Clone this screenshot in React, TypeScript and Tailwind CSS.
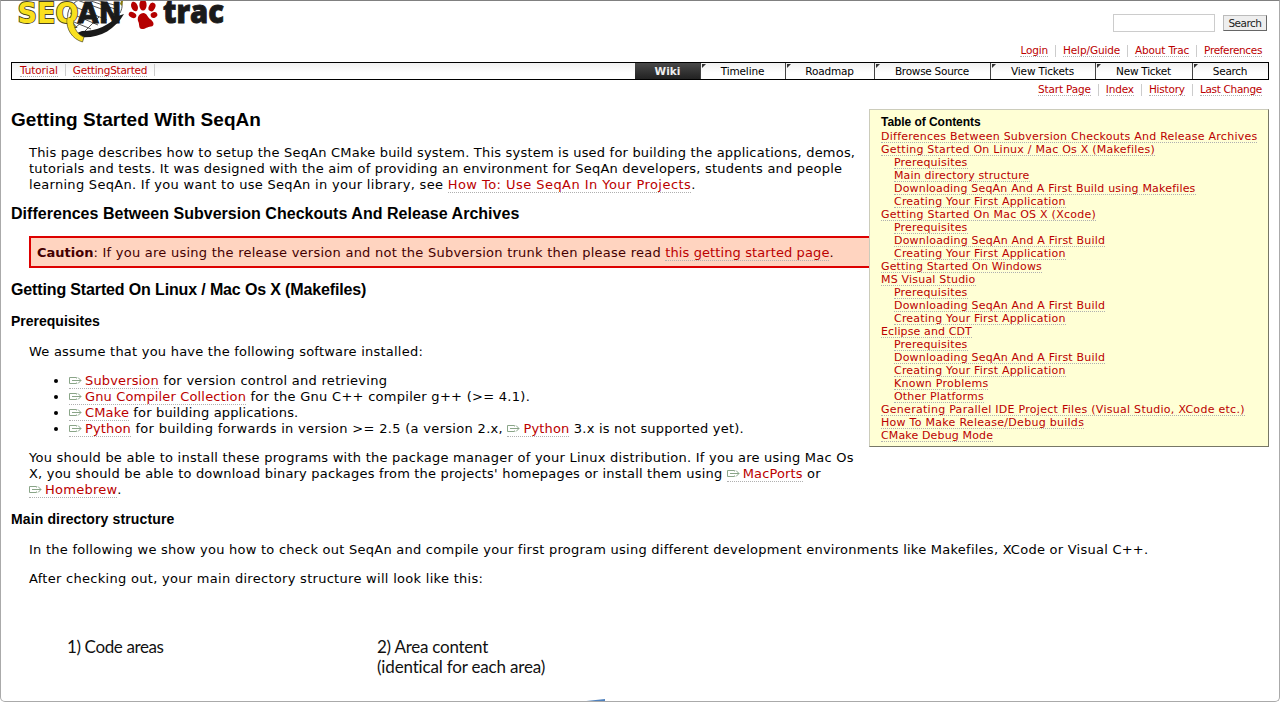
import React from "react";

const link = "text-[#bb0000] border-b border-dotted border-[#b0b0b0]";

function Ext({ children, tr = "tracking-[0.15px]" }: { children: React.ReactNode; tr?: string }) {
  return (
    <a className={`${link} ${tr} inline-block h-[16px] leading-[16px]`}>
      <svg className="mr-[3px] inline-block align-[1px]" width="13" height="7" viewBox="0 0 13 7" fill="none" stroke="#8aa588" strokeWidth="1">
        <path d="M7.500 1.500V.5H.5v6h7v-1M3 3.500h9M9 .5l3 3-3 3" />
      </svg>
      {children}
    </a>
  );
}

function Logo() {
  return (
    <svg className="block" width="230" height="48" viewBox="0 0 230 48">
      <path d="M68 20C66 10 72 3 79 0M77 0l38 14M73 6l34 14M70 13l28 12M69 20l22 9M88 0l30 10M76 27l12-10M85 31l14-14M96 0l22 6M121 0c2 5 1 9-1 13" fill="none" stroke="#444" strokeWidth=".9" />
      <path d="M121 1l2 0-1 5-2-2z" fill="#8a7a10" />
      <path d="M118 16C108 25 98 31 82 31l-5 2 2 4c19 2 35-6 45-23z" fill="#1a1a1a" />
      <g fontFamily="DejaVu Sans, sans-serif" fontSize="28.5" fontWeight="700">
        <text x="77.5" y="23" textLength="44" lengthAdjust="spacingAndGlyphs" fill="#1a1a1a" stroke="#1a1a1a" strokeWidth="1">AN</text>
        <text x="17.5" y="23" textLength="61" lengthAdjust="spacingAndGlyphs" fill="#f9e01e" stroke="#4a4520" strokeWidth="1.8" paintOrder="stroke">SEQ</text>
      </g>
      <path d="M67 19c-1 10 5 20 15.500 23l1.500-5c-6-2-10-8-11-17z" fill="#f9e01e" stroke="#4a4520" strokeWidth=".7" />
      <path d="M67.500 17.500l5.500 1 .5 4-6 0z" fill="#f9e01e" />
      <g fill="#b50000">
        <ellipse cx="132.500" cy="15" rx="4" ry="2.700" transform="rotate(25 132.500 15)" />
        <ellipse cx="134.500" cy="6.500" rx="3.200" ry="5" transform="rotate(-20 134.500 6.500)" />
        <ellipse cx="143" cy="5" rx="3.600" ry="5.500" />
        <ellipse cx="152" cy="7" rx="3.200" ry="4.500" transform="rotate(25 152 7)" />
        <ellipse cx="154" cy="15" rx="3.400" ry="2.800" transform="rotate(-20 154 15)" />
        <path d="M143.500 13c3 0 4 4 6.500 6 4 2.500 5 7 1 7.500-4 .3-5 2.500-9 2.500-4-.3-2-5-4-8-1-4 1.500-8 5.500-8z" />
      </g>
      <text x="163" y="23" fontSize="31.5" fontWeight="800" fontFamily="Open Sans, sans-serif" textLength="61" lengthAdjust="spacingAndGlyphs" fill="#1a1a1a" stroke="#1a1a1a" strokeWidth=".9">trac</text>
    </svg>
  );
}

function MetaNav({ items }: { items: [string, string][] }) {
  return (
    <div className="flex h-[13px] items-center justify-end">
      {items.map(([t, w], i) => (
        <div key={t} className={i ? "ml-[7px] flex h-[12px] items-center border-l border-[#cccccc] pl-[7px]" : "flex h-[12px] items-center"}>
          <a className={`${link} ${w} h-[13px] whitespace-nowrap leading-[13px]`}>{t}</a>
        </div>
      ))}
    </div>
  );
}

const tabs: [string, string][] = [
  ["Timeline", "w-[85px] tracking-[-0.15px]"],
  ["Roadmap", "w-[89px] tracking-[-0.2px]"],
  ["Browse Source", "w-[116px] tracking-[-0.27px]"],
  ["View Tickets", "w-[105px] tracking-[-0.15px]"],
  ["New Ticket", "w-[97px] tracking-[-0.25px]"],
  ["Search", "w-[76px] tracking-[-0.3px]"],
];

const toc: [number, string, string][] = [
  [0, "Differences Between Subversion Checkouts And Release Archives", "tracking-[0.245px]"],
  [0, "Getting Started On Linux / Mac Os X (Makefiles)", "tracking-[0.24px]"],
  [1, "Prerequisites", "tracking-[0.18px]"],
  [1, "Main directory structure", "tracking-[0.13px]"],
  [1, "Downloading SeqAn And A First Build using Makefiles", "tracking-[0.18px]"],
  [1, "Creating Your First Application", "tracking-[0.2px]"],
  [0, "Getting Started On Mac OS X (Xcode)", "tracking-[0.25px]"],
  [1, "Prerequisites", "tracking-[0.18px]"],
  [1, "Downloading SeqAn And A First Build", "tracking-[0.2px]"],
  [1, "Creating Your First Application", "tracking-[0.2px]"],
  [0, "Getting Started On Windows", "tracking-[0.16px]"],
  [0, "MS Visual Studio", "tracking-[0.2px]"],
  [1, "Prerequisites", "tracking-[0.18px]"],
  [1, "Downloading SeqAn And A First Build", "tracking-[0.2px]"],
  [1, "Creating Your First Application", "tracking-[0.2px]"],
  [0, "Eclipse and CDT", "tracking-[0.12px]"],
  [1, "Prerequisites", "tracking-[0.18px]"],
  [1, "Downloading SeqAn And A First Build", "tracking-[0.2px]"],
  [1, "Creating Your First Application", "tracking-[0.2px]"],
  [1, "Known Problems", "tracking-[0.24px]"],
  [1, "Other Platforms", "tracking-[0.2px]"],
  [0, "Generating Parallel IDE Project Files (Visual Studio, XCode etc.)", "tracking-[0.28px]"],
  [0, "How To Make Release/Debug builds", "tracking-[0.28px]"],
  [0, "CMake Debug Mode", "tracking-[0.14px]"],
];

const L = ({ children, tr = "" }: { children: React.ReactNode; tr?: string }) => (
  <span className={`block h-[16px] ${tr}`}>{children}</span>
);

export default function App() {
  return (
    <div className="h-[702px] w-[1280px] overflow-hidden rounded-b-[5px] border border-[#aaaaaa] border-t-[#808080] bg-white font-['DejaVu_Sans',sans-serif] text-[13px] leading-[16px] text-black">
      <header className="flex h-[61px] justify-between pr-[12px] text-[11px]">
        <div className="-ml-px -mt-px"><Logo /></div>
        <div className="flex flex-col items-end pt-[13px]">
          <div className="flex gap-[8px]">
            <div className="h-[18px] w-[102px] border border-[#cccccc]" />
            <button className="mt-px h-[16px] w-[44px] border border-[#bbbbbb] border-b-[#666666] border-r-[#666666] bg-[#eeeeee] text-[10.5px] leading-[14px] tracking-[-0.5px] text-[#222222]">Search</button>
          </div>
          <div className="pr-[5px] pt-[12px] text-[10.5px]">
            <MetaNav items={[["Login", "tracking-[-0.15px]"], ["Help/Guide", "tracking-[-0.12px]"], ["About Trac", "tracking-[-0.18px]"], ["Preferences", "tracking-[-0.35px]"]]} />
          </div>
        </div>
      </header>

      <nav className="mx-[10px] flex h-[18px] w-[1258px] justify-between border border-black bg-linear-to-b from-[#f0f0f0] to-white to-60% text-[10.5px]">
        <div className="flex pl-[8px] pt-px">
          <a className={`${link} h-[13px] leading-[13px] tracking-[-0.1px]`}>Tutorial</a>
          <span className="mx-[7px] h-[12px] w-px bg-[#cccccc]" />
          <a className={`${link} h-[13px] leading-[13px] tracking-[-0.25px]`}>GettingStarted</a>
          <span className="ml-[7px] h-[12px] w-px bg-[#cccccc]" />
        </div>
        <div className="flex h-[16px] leading-[16px]">
          <div className="w-[65px] bg-linear-to-b from-[#4a4a4a] to-[#222222] text-center font-bold text-[#eeeeee]">Wiki</div>
          {tabs.map(([t, w]) => (
            <div key={t} className={`${w} flex whitespace-nowrap border-l border-[#444444]`}>
              <svg width="5" height="5" viewBox="0 0 5 5" className="ml-px mt-px shrink-0"><path d="M0 0h4L0 4z" fill="#333" /></svg>
              <span className="grow pr-[7px] text-center">{t}</span>
            </div>
          ))}
        </div>
      </nav>
      <div className="pr-[17px] pt-[3px] text-[10.5px]">
        <MetaNav items={[["Start Page", "tracking-[-0.17px]"], ["Index", "tracking-[-0.15px]"], ["History", "tracking-[-0.2px]"], ["Last Change", "tracking-[-0.3px]"]]} />
      </div>

      <main className="ml-[10px] mr-[10px] mt-[13px] whitespace-nowrap">
        <aside className="float-right h-[338px] w-[400px] border border-b-[#777766] border-l-[#ccccbb] border-r-[#777766] border-t-[#ccccbb] bg-[#ffffd5] pl-[11px] pt-[6px] text-[11px] leading-[13px]">
          <h4 className="mb-px h-[13px] font-['Liberation_Sans',sans-serif] text-[12px] font-bold tracking-[-0.05px]">Table of Contents</h4>
          {toc.map(([lvl, t, tr], i) => (
            <div key={i} className={`h-[13px] ${lvl ? "pl-[13px]" : ""}`}>
              <a className={`${link} ${tr} inline-block h-[13px]`}>{t}</a>
            </div>
          ))}
        </aside>
        <h1 className="font-['Liberation_Sans',sans-serif] text-[19px] font-bold leading-[22px] tracking-[0.04px]">Getting Started With SeqAn</h1>
        <div className="ml-[18px] mt-[14px]">
          <L tr="tracking-[0.2px]">This page describes how to setup the SeqAn CMake build system. This system is used for building the applications, demos,</L>
          <L tr="tracking-[0.21px]">tutorials and tests. It was designed with the aim of providing an environment for SeqAn developers, students and people</L>
          <L tr="tracking-[0.3px]">learning SeqAn. If you want to use SeqAn in your library, see <a className={`${link} tracking-[0.45px]`}>How To: Use SeqAn In Your Projects</a>.</L>
        </div>
        <h2 className="mt-[11px] font-['Liberation_Sans',sans-serif] text-[16px] font-bold leading-[20px] tracking-[0.03px]">Differences Between Subversion Checkouts And Release Archives</h2>
        <div className="ml-[18px] mt-[12px] h-[32px] border-2 border-[#dd0000] bg-[#ffd4c0] pl-[6px] pt-[7px] text-[#440000]">
          <L tr="tracking-[0.25px]"><b className="tracking-[0px]">Caution</b>: If you are using the release version and not the Subversion trunk then please read <a className={`${link} tracking-[0.1px]`}>this getting started page</a>.</L>
        </div>
        <h2 className="mt-[12px] font-['Liberation_Sans',sans-serif] text-[16px] font-bold leading-[20px] tracking-[-0.14px]">Getting Started On Linux / Mac Os X (Makefiles)</h2>
        <h3 className="mt-[12px] font-['Liberation_Sans',sans-serif] text-[14px] font-bold leading-[18px]">Prerequisites</h3>
        <div className="ml-[18px] mt-[14px]"><L tr="tracking-[0.23px]">We assume that you have the following software installed:</L></div>
        <ul className="ml-[58px] mt-[13px] list-disc">
          <li><L tr="tracking-[0.28px]"><Ext>Subversion</Ext> for version control and retrieving</L></li>
          <li><L tr="tracking-[0.28px]"><Ext>Gnu Compiler Collection</Ext> for the Gnu C++ compiler g++ (&gt;= 4.1).</L></li>
          <li><L tr="tracking-[0.16px]"><Ext>CMake</Ext> for building applications.</L></li>
          <li><L tr="tracking-[0.31px]"><Ext>Python</Ext> for building forwards in version &gt;= 2.5 (a version 2.x, <Ext>Python</Ext><span className="tracking-[0.22px]"> 3.x is not supported yet).</span></L></li>
        </ul>
        <div className="ml-[18px] mt-[13px]">
          <L tr="tracking-[0.24px]">You should be able to install these programs with the package manager of your Linux distribution. If you are using Mac Os</L>
          <L tr="tracking-[0.2px]">X, you should be able to download binary packages from the projects' homepages or install them using <Ext>MacPorts</Ext> or</L>
          <L tr="tracking-[0.25px]"><Ext tr="tracking-[0.25px]">Homebrew</Ext>.</L>
        </div>
        <h3 className="mt-[12px] font-['Liberation_Sans',sans-serif] text-[14px] font-bold leading-[18px] tracking-[0.13px]">Main directory structure</h3>
        <div className="ml-[18px] mt-[14px]"><L tr="tracking-[0.25px]">In the following we show you how to check out SeqAn and compile your first program using different development environments like Makefiles, XCode or Visual C++.</L></div>
        <div className="ml-[18px] mt-[13px]"><L tr="tracking-[0.29px]">After checking out, your main directory structure will look like this:</L></div>
        <figure className="ml-[56px] mt-[50px] flex h-[64px] font-['Lato',sans-serif] text-[17px] leading-[20px] text-[#111111]">
          <div className="w-[310px] tracking-[-0.38px]">1) Code areas</div>
          <div className="w-[200px]">
            <div className="tracking-[-0.25px]">2) Area content</div>
            <div className="tracking-[-0.17px]">(identical for each area)</div>
            <svg className="ml-[200px] mt-[22px] block" width="28" height="3" viewBox="0 0 28 3"><path d="M0 3L28 0v3z" fill="#4f81bd" /></svg>
          </div>
        </figure>
      </main>
    </div>
  );
}
